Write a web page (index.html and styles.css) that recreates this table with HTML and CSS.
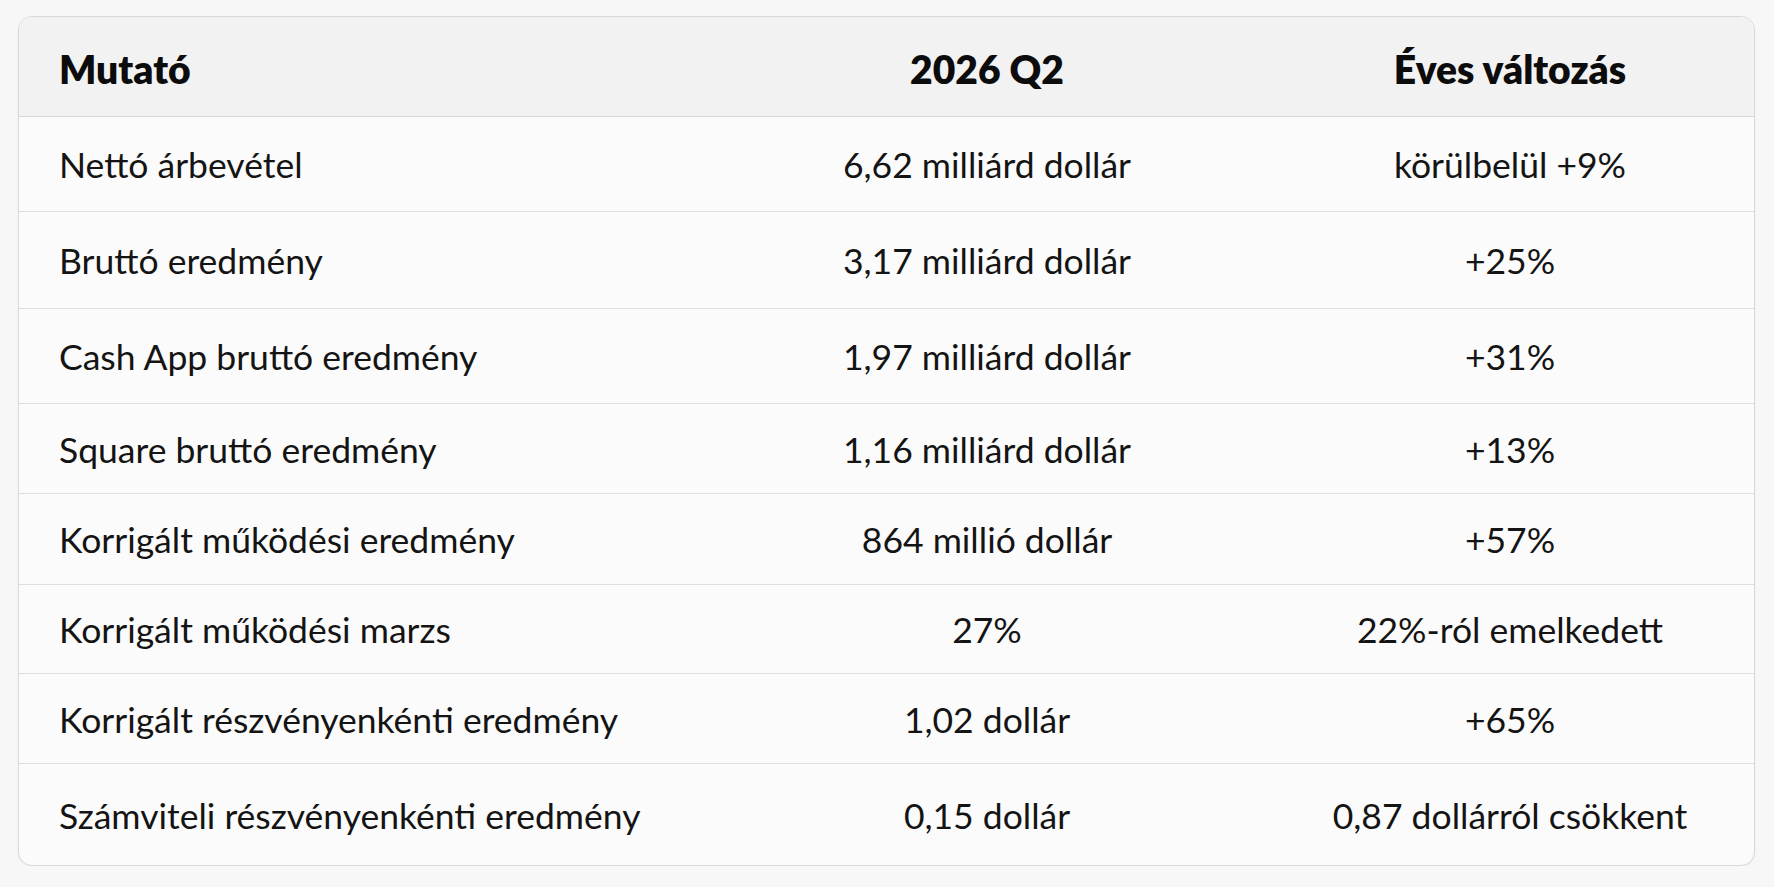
FILE: index.html
```html
<!DOCTYPE html>
<html lang="hu">
<head>
<meta charset="utf-8">
<title>Mutatók</title>
<link rel="stylesheet" href="styles.css">
</head>
<body>
<div class="card">
  <table class="metrics">
    <colgroup>
      <col class="c1"><col class="c2"><col class="c3">
    </colgroup>
    <thead>
      <tr class="head">
        <th class="left">Mutató</th>
        <th>2026 Q2</th>
        <th>Éves változás</th>
      </tr>
    </thead>
    <tbody>
      <tr class="r1"><td class="left">Nettó árbevétel</td><td>6,62 milliárd dollár</td><td>körülbelül +9%</td></tr>
      <tr class="r2"><td class="left">Bruttó eredmény</td><td>3,17 milliárd dollár</td><td>+25%</td></tr>
      <tr class="r3"><td class="left">Cash App bruttó eredmény</td><td>1,97 milliárd dollár</td><td>+31%</td></tr>
      <tr class="r4"><td class="left">Square bruttó eredmény</td><td>1,16 milliárd dollár</td><td>+13%</td></tr>
      <tr class="r5"><td class="left">Korrigált működési eredmény</td><td>864 millió dollár</td><td>+57%</td></tr>
      <tr class="r6"><td class="left">Korrigált működési marzs</td><td>27%</td><td>22%-ról emelkedett</td></tr>
      <tr class="r7"><td class="left">Korrigált részvényenkénti eredmény</td><td>1,02 dollár</td><td>+65%</td></tr>
      <tr class="r8"><td class="left">Számviteli részvényenkénti eredmény</td><td>0,15 dollár</td><td>0,87 dollárról csökkent</td></tr>
    </tbody>
  </table>
</div>
</body>
</html>
```
FILE: styles.css
```css
html, body {
  margin: 0;
  padding: 0;
  background: #f7f7f7;
}
body {
  font-family: Lato, "Open Sans", sans-serif;
  color: #111;
  padding: 16px 17px 0 18px;
}
.card {
  width: 1735px;
  border: 1.5px solid #d8d8d8;
  border-radius: 14px;
  overflow: hidden;
  background: #fbfbfb;
  box-shadow: 0 1px 3px rgba(0,0,0,0.04);
}
.metrics {
  width: 100%;
  border-collapse: collapse;
  table-layout: fixed;
}
.c1 { width: 689px; }
.c2 { width: 558px; }
.c3 { width: 488px; }
th, td {
  text-align: center;
  vertical-align: middle;
  padding: 0;
  border-bottom: 1.5px solid #dedede;
  white-space: nowrap;
  line-height: 1.2;
}
th {
  font-size: 39px;
  font-weight: 800;
  background: #f2f2f2;
  border-bottom-color: #d6d6d6;
  color: #0c0c0c;
  padding-top: 6px;
}
td {
  font-size: 35.5px;
  font-weight: 400;
  color: #141414;
  padding-top: 4px;
}
.left {
  text-align: left;
  padding-left: 40px;
}
.head { height: 99px; }
.r1 { height: 95px; }
.r2 { height: 97px; }
.r3 { height: 95px; }
.r4 { height: 90px; }
.r5 { height: 91px; }
.r6 { height: 89px; }
.r7 { height: 90px; }
.r8 { height: 102px; }
.r8 td { border-bottom: none; }
```
